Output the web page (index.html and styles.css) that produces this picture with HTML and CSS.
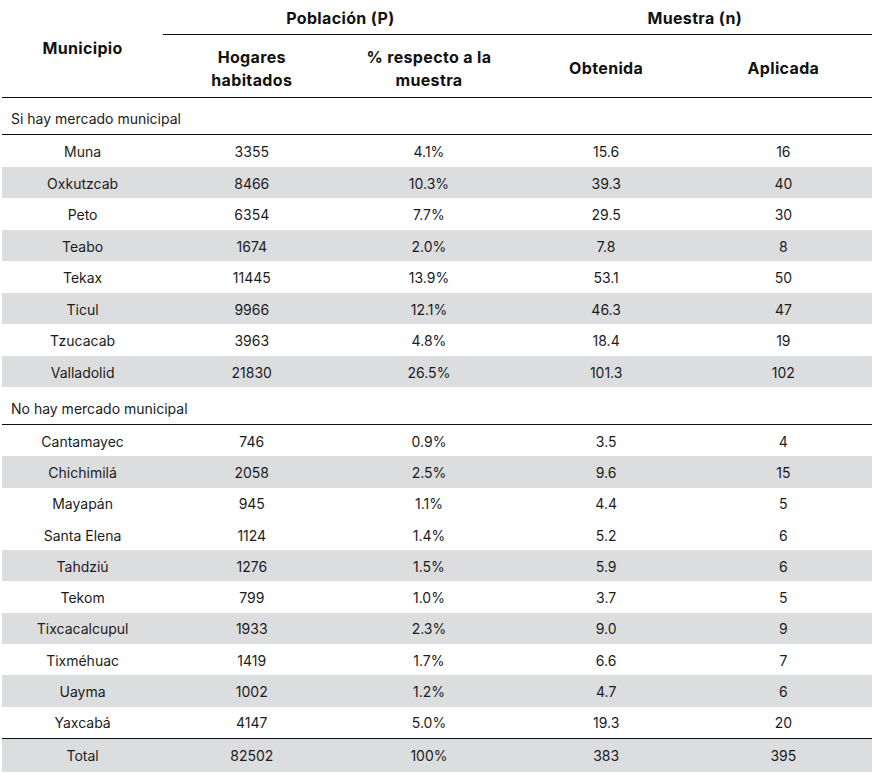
FILE: index.html
```html
<!DOCTYPE html>
<html lang="es">
<head>
<meta charset="utf-8">
<title>Muestra por municipio</title>
<link rel="stylesheet" href="styles.css">
</head>
<body>
<table class="tbl">
  <colgroup>
    <col class="c1"><col class="cn"><col class="cn"><col class="cn"><col class="cn">
  </colgroup>
  <thead>
    <tr class="h1">
      <th rowspan="2" class="muni">Municipio</th>
      <th colspan="2" class="grp">Población (P)</th>
      <th colspan="2" class="grp">Muestra (n)</th>
    </tr>
    <tr class="h2">
      <th class="sub">Hogares<br>habitados</th>
      <th class="sub">% respecto a la<br>muestra</th>
      <th class="sub">Obtenida</th>
      <th class="sub">Aplicada</th>
    </tr>
  </thead>
  <tbody>
    <tr class="sec s1"><td colspan="5">Si hay mercado municipal</td></tr>
    <tr class="r"><td>Muna</td><td>3355</td><td>4.1%</td><td>15.6</td><td>16</td></tr>
    <tr class="r g"><td>Oxkutzcab</td><td>8466</td><td>10.3%</td><td>39.3</td><td>40</td></tr>
    <tr class="r"><td>Peto</td><td>6354</td><td>7.7%</td><td>29.5</td><td>30</td></tr>
    <tr class="r g"><td>Teabo</td><td>1674</td><td>2.0%</td><td>7.8</td><td>8</td></tr>
    <tr class="r"><td>Tekax</td><td>11445</td><td>13.9%</td><td>53.1</td><td>50</td></tr>
    <tr class="r g"><td>Ticul</td><td>9966</td><td>12.1%</td><td>46.3</td><td>47</td></tr>
    <tr class="r"><td>Tzucacab</td><td>3963</td><td>4.8%</td><td>18.4</td><td>19</td></tr>
    <tr class="r g"><td>Valladolid</td><td>21830</td><td>26.5%</td><td>101.3</td><td>102</td></tr>
    <tr class="sec s2"><td colspan="5">No hay mercado municipal</td></tr>
    <tr class="r2"><td>Cantamayec</td><td>746</td><td>0.9%</td><td>3.5</td><td>4</td></tr>
    <tr class="r2 g"><td>Chichimilá</td><td>2058</td><td>2.5%</td><td>9.6</td><td>15</td></tr>
    <tr class="r2"><td>Mayapán</td><td>945</td><td>1.1%</td><td>4.4</td><td>5</td></tr>
    <tr class="r2"><td>Santa Elena</td><td>1124</td><td>1.4%</td><td>5.2</td><td>6</td></tr>
    <tr class="r2 g"><td>Tahdziú</td><td>1276</td><td>1.5%</td><td>5.9</td><td>6</td></tr>
    <tr class="r2"><td>Tekom</td><td>799</td><td>1.0%</td><td>3.7</td><td>5</td></tr>
    <tr class="r2 g"><td>Tixcacalcupul</td><td>1933</td><td>2.3%</td><td>9.0</td><td>9</td></tr>
    <tr class="r2"><td>Tixméhuac</td><td>1419</td><td>1.7%</td><td>6.6</td><td>7</td></tr>
    <tr class="r2 g"><td>Uayma</td><td>1002</td><td>1.2%</td><td>4.7</td><td>6</td></tr>
    <tr class="r2"><td>Yaxcabá</td><td>4147</td><td>5.0%</td><td>19.3</td><td>20</td></tr>
    <tr class="tot g"><td>Total</td><td>82502</td><td>100%</td><td>383</td><td>395</td></tr>
  </tbody>
</table>
</body>
</html>
```

FILE: styles.css
```css
html, body {
  margin: 0;
  padding: 0;
  background: #ffffff;
}

body {
  font-family: Inter, "Noto Sans", "Liberation Sans", sans-serif;
  color: #1c1c1c;
}

.tbl {
  margin: 0 0 0 2px;
  width: 870px;
  table-layout: fixed;
  border-collapse: separate;
  border-spacing: 0;
  font-size: 14px;
}

.c1 { width: 161px; }
.cn { width: 177px; }

th, td {
  padding: 0;
  text-align: center;
  vertical-align: middle;
}

th {
  font-weight: 700;
  font-size: 16px;
  letter-spacing: 0.35px;
  color: #111;
  line-height: 23px;
}

.h1 { height: 35px; }
.h2 { height: 63px; }

.grp {
  border-bottom: 1px solid #111;
  vertical-align: top;
  padding-top: 7px;
}

.muni {
  border-bottom: 1px solid #111;
  vertical-align: top;
  padding-top: 37px;
}

.sub {
  border-bottom: 1px solid #111;
  padding-top: 5px;
}

.sec td {
  text-align: left;
  padding-left: 9px;
  vertical-align: bottom;
  border-bottom: 1px solid #111;
  color: #222;
}

.s1 { height: 37px; }
.s1 td { padding-bottom: 7px; }

.s2 { height: 38px; }
.s2 td { padding-bottom: 7px; }

.r { height: 31.5px; }
.r td { padding-top: 2px; }
.r2 { height: 31.3px; }
.r2 td { padding-top: 1px; }

.g td { background: #dcdddf; }

.tot { height: 34px; }
.tot td { border-top: 1px solid #111; padding-top: 1px; }
```
